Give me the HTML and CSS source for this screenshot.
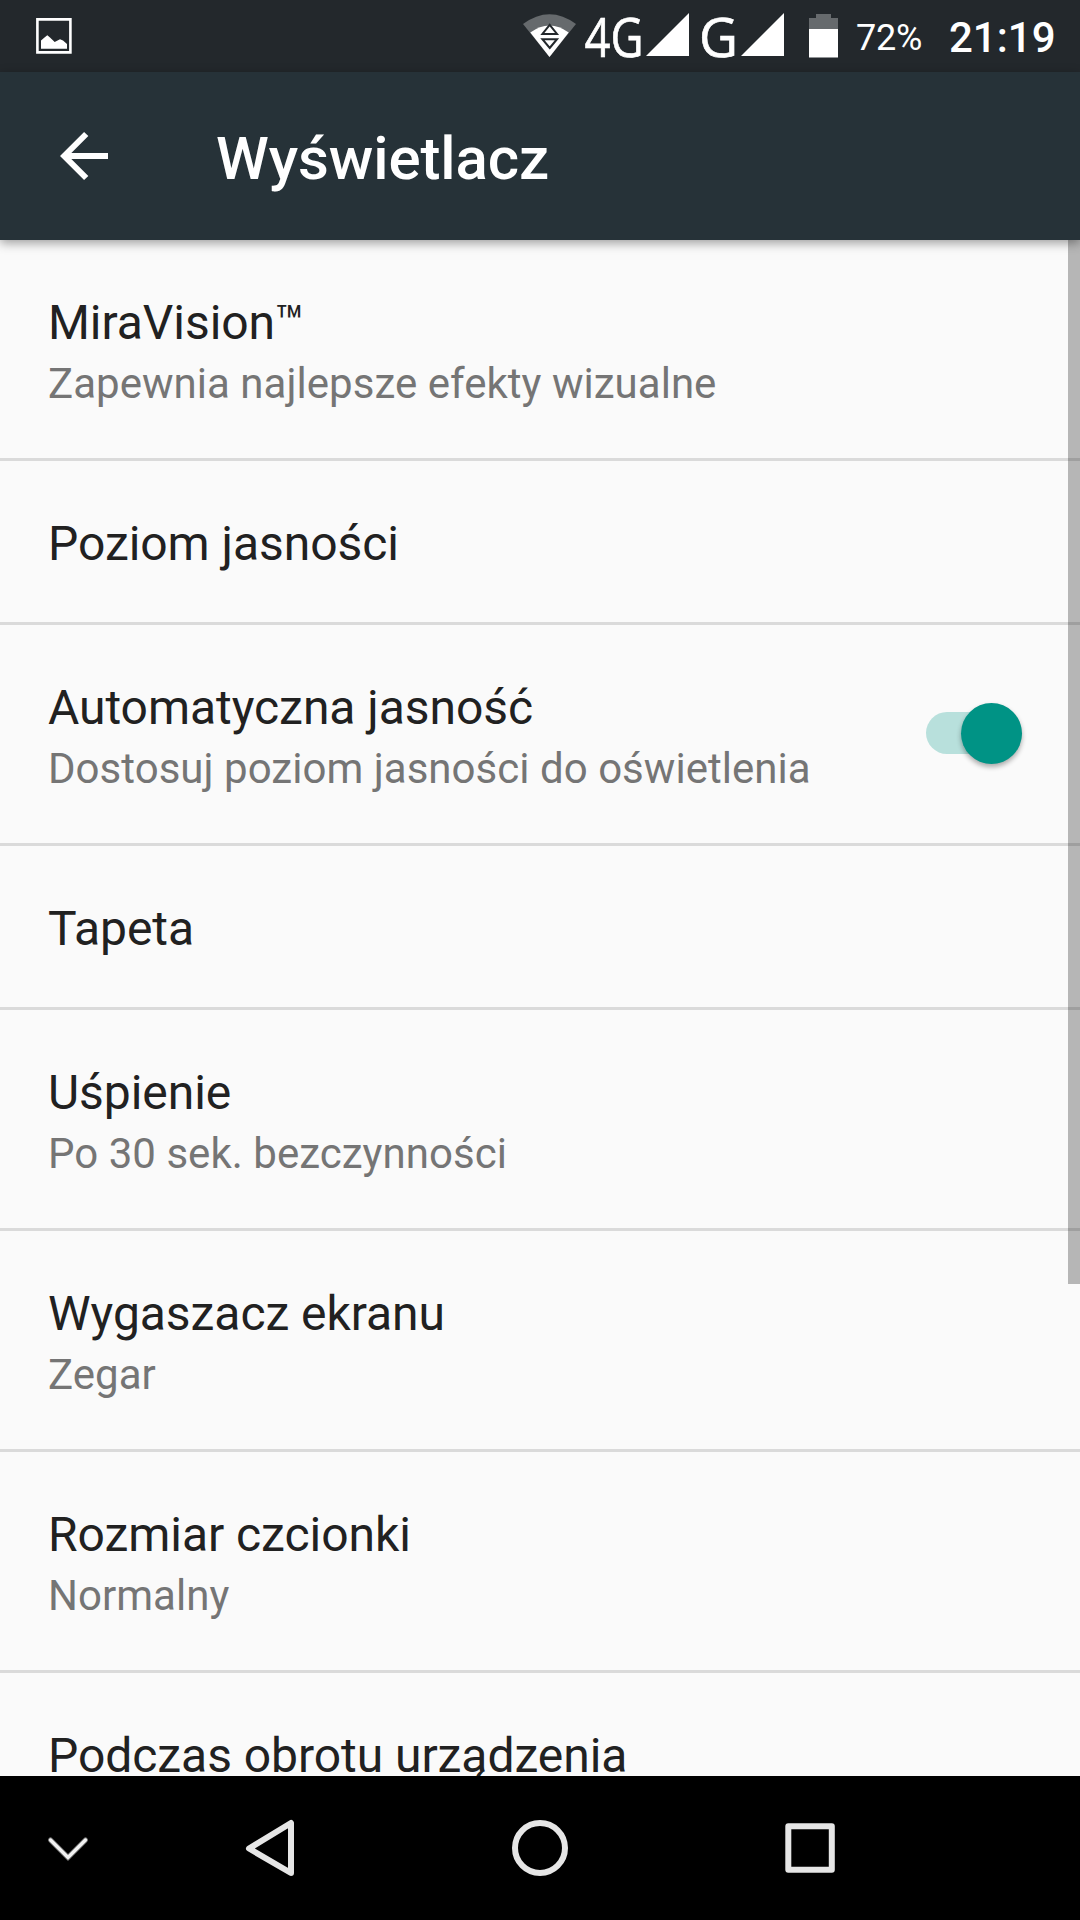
FILE: index.html
```html
<!DOCTYPE html>
<html lang="pl">
<head>
<meta charset="utf-8">
<title>Wyświetlacz</title>
<link rel="stylesheet" href="styles.css">
</head>
<body>
<div class="screen">
  <header class="status-bar">
    <svg class="picture-icon" width="36" height="36" viewBox="0 0 36 36">
      <path d="M1.4 1.4H34.4V34.4H1.4Z" fill="none" stroke="#fff" stroke-width="2.6"/>
      <path d="M5 30.7V22.5L8.5 19.5 11.3 17.2 14 19.5 18.7 24 24 21.3 27 22.5 31 26V30.7Z" fill="#fff"/>
    </svg>
    <svg class="signal-icons" width="264" height="72" viewBox="520 0 264 72">
      <path d="M523 24Q549.5 4.500 576 24L549.500 57Z" fill="#666a6d"/>
      <path d="M530.300 32.500Q549.500 18.500 568.700 32.500L549.500 57Z" fill="#fff"/>
      <path d="M549.700 24.800 557 34H542.400ZM549.700 48 557 39.200H542.400Z" fill="#fff" stroke="#23282c" stroke-width="2"/>
      <g class="network">
        <text x="584.5" y="57" textLength="59" lengthAdjust="spacingAndGlyphs">4G</text>
        <text x="699" y="57" textLength="39" lengthAdjust="spacingAndGlyphs">G</text>
      </g>
      <path d="M689 13V56H646ZM784 13V56H741Z" fill="#fff"/>
    </svg>
    <svg class="battery-icon" width="29" height="44" viewBox="0 0 29 44">
      <path d="M7 0H22V4H29V15H0V4H7Z" fill="#666a6d"/>
      <path d="M0 15H29V43.500H0Z" fill="#fff"/>
    </svg>
    <span class="battery-level">72%</span>
    <span class="clock">21:19</span>
  </header>
  <div class="app-bar">
    <svg class="back-arrow" width="50" height="50" viewBox="0 0 50 50">
      <path d="M48 25H6M26.200 3 4.200 25 26.200 47" fill="none" stroke="#fff" stroke-width="6"/>
    </svg>
    <h1 class="heading">Wyświetlacz</h1>
  </div>
  <main class="settings">
    <div class="row"><div class="title">MiraVision™</div><div class="summary">Zapewnia najlepsze efekty wizualne</div></div>
    <div class="row single"><div class="title">Poziom jasności</div></div>
    <div class="row with-switch">
      <div><div class="title">Automatyczna jasność</div><div class="summary">Dostosuj poziom jasności do oświetlenia</div></div>
      <div class="switch"><div class="thumb"></div></div>
    </div>
    <div class="row single"><div class="title">Tapeta</div></div>
    <div class="row"><div class="title">Uśpienie</div><div class="summary">Po 30 sek. bezczynności</div></div>
    <div class="row"><div class="title">Wygaszacz ekranu</div><div class="summary">Zegar</div></div>
    <div class="row"><div class="title">Rozmiar czcionki</div><div class="summary">Normalny</div></div>
    <div class="row"><div class="title">Podczas obrotu urządzenia</div></div>
    <div class="scrollbar"></div>
  </main>
  <nav class="nav-bar">
    <svg width="1080" height="144" viewBox="0 0 1080 144" fill="none" stroke="#e6e6e6" stroke-width="6" stroke-linejoin="round">
      <path d="M50.500 64 68 81.500 85.500 64" stroke="#777" stroke-width="5" stroke-linecap="round" stroke-linejoin="miter"/>
      <path d="M50.500 64 68 81.500 85.500 64" stroke="#f2f2f2" stroke-width="3.200" stroke-linecap="round" stroke-linejoin="miter"/>
      <path d="M291 47V97L249 72.500Z"/>
      <circle cx="540" cy="72" r="25"/>
      <rect x="788.300" y="50.300" width="43.500" height="43.500"/>
    </svg>
  </nav>
</div>
</body>
</html>
```
FILE: styles.css
```css
* { box-sizing: border-box; }
body { margin: 0; font-family: Roboto, sans-serif; }
.screen { display: flex; flex-direction: column; width: 1080px; height: 1920px; overflow: hidden; background: #fafafa; }
.status-bar { display: flex; align-items: flex-start; height: 72px; flex: none; background: #23282c; color: #fff; }
.picture-icon { margin: 18px 0 0 36px; }
.signal-icons { margin-left: 448px; overflow: visible; }
.network { font-family: "Open Sans", sans-serif; font-size: 55px; fill: #fff; stroke: #fff; stroke-width: .7px; }
.battery-icon { margin: 14px 0 0 25px; }
.battery-level { margin: 17px 0 0 18px; width: 68px; font-size: 36px; line-height: 42px; letter-spacing: -.2px; white-space: nowrap; }
.clock { margin: 13px 0 0 25px; font-size: 42px; line-height: 50px; font-weight: 500; white-space: nowrap; }
.app-bar { display: flex; align-items: flex-start; height: 168px; flex: none; background: #263238; position: relative; z-index: 1; box-shadow: 0 3px 10px rgba(0, 0, 0, .38); color: #fff; }
.back-arrow { margin: 59px 0 0 60px; }
.heading { margin: 52px 0 0 106px; font-size: 60px; line-height: 70px; font-weight: 500; letter-spacing: -.1px; }
.settings { flex: 1; min-height: 0; overflow: hidden; position: relative; }
.row { height: 221px; padding: 55px 48px 0; border-bottom: 3px solid #dadada; }
.row.single { height: 164px; }
.with-switch { display: flex; justify-content: space-between; }
.title { font-size: 48px; line-height: 56px; letter-spacing: -.05px; color: #212121; white-space: nowrap; }
.summary { margin-top: 8px; font-size: 42px; line-height: 50px; letter-spacing: .03px; color: #757575; white-space: nowrap; }
.switch { width: 96px; height: 42px; margin: 32px 10px 0 0; background: #b8e0dc; border-radius: 21px; display: flex; align-items: center; justify-content: flex-end; }
.thumb { width: 61px; height: 61px; margin: 1px 0 0; flex: none; border-radius: 50%; background: #009385; box-shadow: 0 3px 5px rgba(0, 0, 0, .32); }
.scrollbar { position: absolute; top: 0; right: 0; width: 12px; height: 1044px; background: rgba(0, 0, 0, .27); }
.nav-bar { height: 144px; flex: none; background: #000; }
.nav-bar svg { display: block; }
```
